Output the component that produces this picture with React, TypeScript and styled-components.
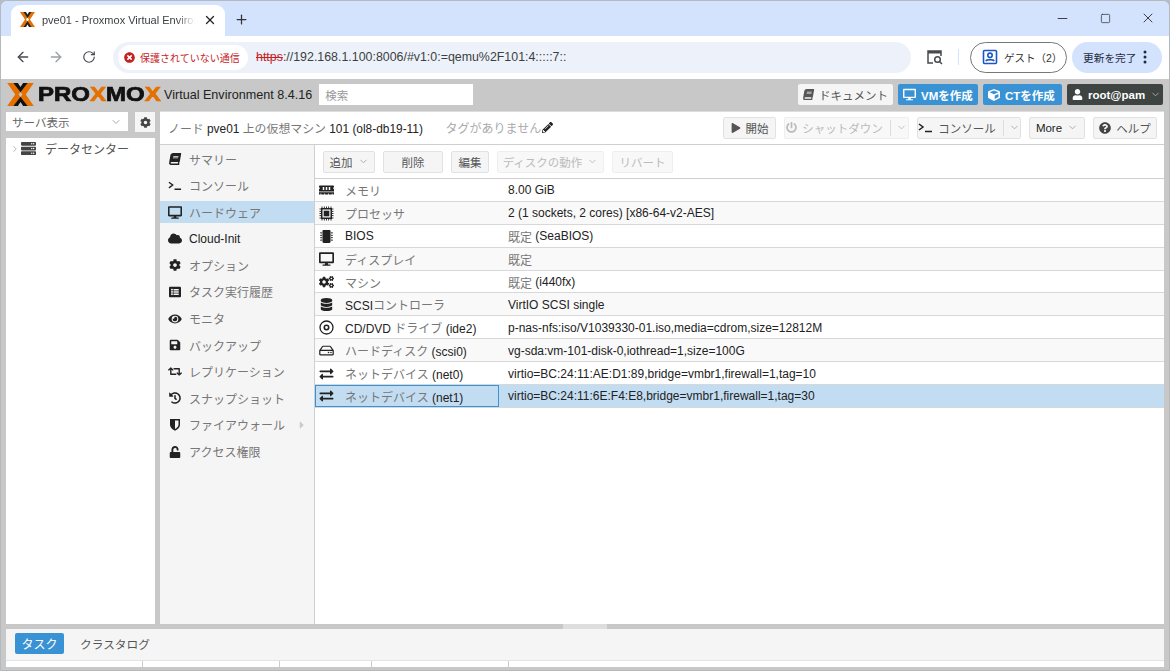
import React from 'react';
import styled, { createGlobalStyle } from 'styled-components';
import { ArrowLeft, ArrowRight, RotateCw, Plus, X as XIcon, Minus, Square, ChevronDown, ChevronRight } from 'lucide-react';
import {
  FaBook, FaDesktop, FaCloud, FaCog, FaListAlt, FaEye, FaSave, FaRetweet, FaHistory, FaUnlock,
  FaMemory, FaMicrochip, FaDatabase, FaCogs, FaExchangeAlt, FaRegHdd, FaUser, FaCube, FaPowerOff, FaPlay,
  FaQuestionCircle, FaPencilAlt, FaServer, FaCaretRight, FaTimesCircle,
} from 'react-icons/fa';

const SANS = `"Liberation Sans", "Noto Sans CJK JP", sans-serif`;

const Global = createGlobalStyle`
  html, body { margin: 0; padding: 0; background: #b9bcc2; }
  * { box-sizing: border-box; }
  body { font-family: ${SANS}; overflow: hidden; }
`;

const Win = styled.div`
  width: 1170px; height: 671px; display: flex; flex-direction: column; overflow: hidden;
  border: 1px solid #b4b8bf; border-radius: 7px 7px 0 0; background: #d3e3fd;
`;
const TabStrip = styled.div`
  height: 35px; flex: none; display: flex; align-items: flex-end; padding-left: 10px; background: #d3e3fd; position: relative;
  &::before { content: ''; position: absolute; left: 257px; top: -1px; width: 62px; height: 1px; background: #5f9480; }
`;
const Tab = styled.div`
  width: 214px; height: 31px; background: #fff; border-radius: 9px 9px 0 0; display: flex; align-items: center;
  padding: 0 9px 2px 9px; font-size: 12px; color: #333;
`;
const TabTitle = styled.span`
  width: 153px; margin-left: 7px; white-space: nowrap; overflow: hidden; font-size: 11px; color: #3c4043; flex: none;
  -webkit-mask-image: linear-gradient(90deg, #000 88%, transparent);
  mask-image: linear-gradient(90deg, #000 88%, transparent);
`;
const TabClose = styled.span`margin-left: 8px; display: flex; color: #222;`;
const NewTab = styled.span`margin: 0 0 9px 9px; display: flex; color: #333;`;
const Spacer = styled.div`flex: 1;`;
const WinCtl = styled.span`
  width: 42.5px; height: 30px; display: flex; align-items: center; justify-content: center; color: #333; margin-bottom: 2px;
`;
const WinCtls = styled.div`display: flex; align-self: flex-start; margin-top: 2px;`;

const BrowserBar = styled.div`
  height: 43px; flex: none; background: #fff; display: flex; align-items: center; padding: 0 6px 1px 5px;
`;
const NavBtn = styled.span<{ $off?: boolean }>`
  width: 33px; display: flex; justify-content: center; color: ${p => (p.$off ? '#9a9ea5' : '#474a4f')};
`;
const Omni = styled.div`
  width: 798px; height: 31px; margin-left: 8px; border-radius: 16px; background: #edf2fa; display: flex; align-items: center; padding-left: 5px;
`;
const Chip = styled.div`
  width: 130px; height: 25px; border-radius: 13px; background: #fff; display: flex; align-items: center; padding-left: 6px;
  color: #c5221f; font-size: 10px; gap: 5px; white-space: nowrap;
`;
const Url = styled.span`margin-left: 8px; font-size: 12.4px; color: #3c4043; white-space: nowrap;`;
const Strike = styled.span`color: #c5221f; text-decoration: line-through;`;
const LensWrap = styled.span`margin-left: 15px; display: flex;`;
const Sep = styled.span`width: 1px; height: 16px; background: #d3e3fd; margin: 0 11px 0 14px;`;
const GuestPill = styled.div`
  width: 97px; height: 31px; border: 1px solid #75777b; border-radius: 16px; display: flex; align-items: center; padding-left: 11px;
  font-size: 10.5px; color: #333; gap: 6px; white-space: nowrap;
`;
const UpdatePill = styled.div`
  width: 90px; height: 31px; margin-left: 5px; border-radius: 16px; background: #d3e3fd; display: flex; align-items: center; padding-left: 11px;
  font-size: 10.7px; color: #1f2a44; white-space: nowrap; gap: 7px;
`;

const Pve = styled.div`flex: 1; min-height: 0; background: #c8c8c8; display: flex; flex-direction: column;`;
const Head = styled.div`height: 32px; flex: none; display: flex; align-items: center; padding: 0 6px 1px 6px;`;
const LogoText = styled.span`
  font-family: "Liberation Sans", sans-serif; font-weight: 700; font-size: 19.5px; color: #111; margin-left: 4px; width: 126px;
  display: inline-block; white-space: nowrap; transform: scaleX(1.23); transform-origin: left center; -webkit-text-stroke: 0.7px #111;
`;
const Ox = styled.span`color: #e57000; -webkit-text-stroke: 0.7px #e57000;`;
const Version = styled.span`font-size: 12.6px; color: #222; white-space: nowrap;`;
const Search = styled.div`
  width: 154px; height: 21px; background: #fff; margin-left: 7px; font-size: 11.5px; color: #999; display: flex; align-items: center; padding-left: 6px;
`;
const HeadBtn = styled.div<{ $kind?: 'plain' | 'blue' | 'dark'; $w: number }>`
  width: ${p => p.$w}px; height: 21px; margin-left: ${p => (p.$kind === 'plain' ? 0 : 5)}px; border-radius: 2px; display: flex; align-items: center; gap: 5px; padding-left: 5px; white-space: nowrap;
  font-size: 11.5px; font-weight: ${p => (p.$kind === 'plain' ? 400 : 700)};
  background: ${p => (p.$kind === 'blue' ? '#3892d4' : p.$kind === 'dark' ? '#3d4442' : '#f5f5f5')};
  color: ${p => (p.$kind === 'plain' ? '#555' : '#fff')};
`;

const Body = styled.div`flex: 1; min-height: 0; display: flex; padding-left: 5px;`;
const Left = styled.div`width: 149px; flex: none; display: flex; flex-direction: column;`;
const LeftTop = styled.div`height: 27px; flex: none; display: flex; gap: 7px; padding-top: 1px;`;
const ViewSelect = styled.div`
  width: 122px; height: 19px; background: #fff; display: flex; align-items: center; justify-content: space-between; padding: 0 6px;
  font-size: 11.5px; color: #666;
`;
const GearBtn = styled.div`
  width: 20px; height: 20px; background: #f5f5f5; display: flex; align-items: center; justify-content: center; color: #444;
`;
const Tree = styled.div`
  flex: 1; background: #fff; display: flex; align-items: flex-start; padding: 3px 0 0 4px; font-size: 12px; color: #555; gap: 1px;
`;
const TreeRow = styled.div`display: flex; align-items: center; gap: 9px; height: 15px;`;
const Main = styled.div`
  flex: 1; margin: 0 5px; background: #fff; display: flex; flex-direction: column; min-width: 0;
`;
const TitleBar = styled.div`
  height: 34px; flex: none; display: flex; align-items: center; padding: 0 7px 1px 8px; border-bottom: 1px solid #cfcfcf; border-top: 1px solid #ddd; font-size: 11.9px; color: #222;
`;
const Jp = styled.span<{ $c?: string }>`color: ${p => p.$c || '#777'};`;
const Title = styled.span`width: 278px; white-space: nowrap;`;
const TagNone = styled.span`font-size: 12px; white-space: nowrap; display: flex; align-items: center; gap: 1px; width: 278px; color: #aaa;`;
const TBtn = styled.div<{ $w: number; $off?: boolean; $ml?: number }>`
  width: ${p => p.$w}px; height: 22px; margin-left: ${p => p.$ml ?? 8}px; flex: none; background: ${p => (p.$off ? '#f8f8f8' : '#f5f5f5')}; border: 1px solid ${p => (p.$off ? '#eee' : '#e2e2e2')}; border-radius: 2px;
  display: flex; align-items: center; justify-content: center; gap: 5px; font-size: 11.5px; white-space: nowrap; color: ${p => (p.$off ? '#bbb' : '#555')};
`;
const SplitLine = styled.span`width: 1px; height: 16px; background: #ddd; margin-left: 2px;`;
const Content = styled.div`flex: 1; min-height: 0; display: flex;`;
const Nav = styled.div`
  width: 155px; flex: none; background: #f5f5f5; border-right: 1px solid #cfcfcf; padding-top: 3px; display: flex; flex-direction: column;
`;
const NavItem = styled.div<{ $on?: boolean; $dark?: boolean }>`
  height: 22px; margin-bottom: 4.6px; padding-left: 8px; display: flex; align-items: center; gap: 7px; font-size: 12px; color: ${p => (p.$dark ? '#222' : '#777')};
  background: ${p => (p.$on ? '#c2ddf2' : 'transparent')}; flex: none; white-space: nowrap;
  & > svg:first-child { width: 14px; flex: none; color: #222; }
`;
const NavArrow = styled.span`margin-left: 4px; display: flex; color: #ccc;`;
const SlantBook = styled(FaBook)`transform: skewX(-10deg);`;
const Panel = styled.div`flex: 1; min-width: 0; display: flex; flex-direction: column;`;
const Tools = styled.div`height: 34px; flex: none; display: flex; align-items: center; border-bottom: 1px solid #cfcfcf;`;
const Row = styled.div<{ $alt?: boolean; $sel?: boolean }>`
  height: 22.9px; flex: none; display: flex; border-bottom: 1px solid #d8d8d8; font-size: 12px; color: #222;
  background: ${p => (p.$sel ? '#c2ddf2' : p.$alt ? '#f9f9f9' : '#fff')};
`;
const NameCell = styled.div<{ $sel?: boolean }>`
  width: 184px; flex: none; display: flex; align-items: center; padding: 1px 0 0 ${p => (p.$sel ? 3 : 4)}px; gap: 11px; white-space: nowrap;
  border: ${p => (p.$sel ? '1px solid #3892d4' : 'none')};
  & > svg { width: 15px; flex: none; color: #222; }
`;
const ValCell = styled.div`flex: 1; display: flex; align-items: center; padding: 1px 0 0 9px; white-space: pre;`;

const Gutter = styled.div`height: 5px; flex: none; display: flex; justify-content: flex-end; padding-right: 562px;`;
const Collapse = styled.div`width: 44px; height: 5px; background: #dedede;`;
const Foot = styled.div`
  height: 31px; flex: none; background: #f5f5f5; margin: 0 5px; display: flex; align-items: center; padding: 0 0 3px 9px; gap: 16px; font-size: 11.7px; color: #555;
`;
const TaskTab = styled.div`
  width: 49px; height: 21px; background: #3892d4; color: #fff; display: flex; align-items: center; justify-content: center; border-radius: 2px; font-size: 12px;
`;
const FootHead = styled.div`height: 7px; flex: none; margin: 0 5px; background: #fff; border-top: 1px solid #e3e3e3; display: flex;`;
const FootCol = styled.div<{ $w: number }>`width: ${p => p.$w}px; border-right: 1px solid #ccc; height: 100%;`;
const FootBase = styled.div`height: 3px; flex: none;`;

const MarkX = () => (
  <svg width="27" height="23" viewBox="0 0 30 26" style={{ flex: 'none' }}>
    <path d="M0 0h8l9 13-9 13H0l9-13zM30 0h-8l-9 13 9 13h8l-9-13z" fill="#e57000" />
    <path d="M7 0h5l3 4.500L18 0h5l-8 10.500zM7 26h5l3-4.500 3 4.500h5l-8-10.500z" fill="#111" />
  </svg>
);
const Tiny = () => (
  <svg width="15" height="15" viewBox="0 0 30 30" style={{ flex: 'none' }}>
    <path d="M0 0h8l10 15-10 15H0l10-15zM30 0h-8L12 15l10 15h8L20 15z" fill="#e57000" />
    <path d="M7 0h5l3 5 3-5h5l-8 12zM7 30h5l3-5 3 5h5l-8-12z" fill="#222" />
  </svg>
);
const Lens = () => (
  <svg width="18" height="16" viewBox="0 0 18 16" fill="none" stroke="#474a4f" strokeWidth="1.5">
    <path d="M7 14H2V2h13v5" />
    <rect x="2" y="2" width="13" height="2.500" fill="#474a4f" stroke="none" />
    <circle cx="11.500" cy="10.500" r="2.800" />
    <path d="M13.500 12.500l2.500 2.500" />
  </svg>
);
const Guest = () => (
  <svg width="16" height="16" viewBox="0 0 16 16" fill="none" stroke="#1a56c4" strokeWidth="1.6">
    <rect x="1.500" y="1.500" width="13" height="13" rx="1" />
    <circle cx="8" cy="6.300" r="2.200" />
    <path d="M3.800 12c1-1.800 7.400-1.800 8.400 0" />
  </svg>
);
const Prompt = () => (
  <svg width="15" height="11" viewBox="0 0 15 11" fill="none" stroke="#222" strokeWidth="1.500" style={{ flex: 'none' }}>
    <path d="M1 2l4 3-4 3M7 9.500h7" />
  </svg>
);
const Disc = () => (
  <svg width="15" height="15" viewBox="0 0 15 15" fill="none" stroke="#222" style={{ flex: 'none' }}>
    <circle cx="7.500" cy="7.500" r="6.500" strokeWidth="1.300" />
    <circle cx="7.500" cy="7.500" r="2.200" strokeWidth="1.600" />
  </svg>
);
const Cpu = () => (
  <svg width="15" height="15" viewBox="0 0 15 15" style={{ flex: 'none' }}>
    <path d="M3 0.500v14M5.400 0.500v14M7.500 0.500v14M9.600 0.500v14M12 0.500v14M0.500 3h14M0.500 5.400h14M0.500 7.500h14M0.500 9.600h14M0.500 12h14" stroke="#222" strokeWidth="0.900" />
    <rect x="2" y="2" width="11" height="11" fill="#222" />
    <rect x="3.500" y="3.500" width="8" height="8" fill="#f9f9f9" />
    <rect x="4.700" y="4.700" width="5.600" height="5.600" fill="#222" />
  </svg>
);
const Shield = () => (
  <svg width="12" height="13" viewBox="0 0 12 13" style={{ flex: 'none' }}>
    <path d="M1 1h10v5.500C11 10 8 11.800 6 12.700 4 11.800 1 10 1 6.500z" fill="#222" />
    <path d="M6 2.500h3.500v4C9.500 8.800 7.500 10 6 10.900z" fill="#f5f5f5" />
  </svg>
);

const navItems: Array<[React.ReactNode, string, boolean?]> = [
  [<SlantBook size={12} />, 'サマリー'],
  [<Prompt />, 'コンソール'],
  [<FaDesktop size={13} />, 'ハードウェア'],
  [<FaCloud size={13} />, 'Cloud-Init', true],
  [<FaCog size={12} />, 'オプション'],
  [<FaListAlt size={12} />, 'タスク実行履歴'],
  [<FaEye size={12} />, 'モニタ'],
  [<FaSave size={12} />, 'バックアップ'],
  [<FaRetweet size={13} />, 'レプリケーション'],
  [<FaHistory size={12} />, 'スナップショット'],
  [<Shield />, 'ファイアウォール'],
  [<FaUnlock size={12} />, 'アクセス権限'],
];

const rows: Array<[React.ReactNode, React.ReactNode, React.ReactNode]> = [
  [<FaMemory size={14} />, <Jp>メモリ</Jp>, '8.00 GiB'],
  [<Cpu />, <Jp>プロセッサ</Jp>, '2 (1 sockets, 2 cores) [x86-64-v2-AES]'],
  [<FaMicrochip size={13} />, 'BIOS', <><Jp>既定 </Jp>(SeaBIOS)</>],
  [<FaDesktop size={14} />, <Jp>ディスプレイ</Jp>, <Jp>既定</Jp>],
  [<FaCogs size={14} />, <Jp>マシン</Jp>, <><Jp>既定 </Jp>(i440fx)</>],
  [<FaDatabase size={13} />, <>SCSI<Jp>コントローラ</Jp></>, 'VirtIO SCSI single'],
  [<Disc />, <>CD/DVD <Jp>ドライブ</Jp> (ide2)</>, 'p-nas-nfs:iso/V1039330-01.iso,media=cdrom,size=12812M'],
  [<FaRegHdd size={13} />, <><Jp>ハードディスク</Jp> (scsi0)</>, 'vg-sda:vm-101-disk-0,iothread=1,size=100G'],
  [<FaExchangeAlt size={14} />, <><Jp>ネットデバイス</Jp> (net0)</>, 'virtio=BC:24:11:AE:D1:89,bridge=vmbr1,firewall=1,tag=10'],
  [<FaExchangeAlt size={14} />, <><Jp>ネットデバイス</Jp> (net1)</>, 'virtio=BC:24:11:6E:F4:E8,bridge=vmbr1,firewall=1,tag=30'],
];

export default function App() {
  return (
    <>
      <Global />
      <Win>
        <TabStrip>
          <Tab>
            <Tiny />
            <TabTitle>pve01 - Proxmox Virtual Environment</TabTitle>
            <TabClose><XIcon size={14} strokeWidth={2.2} /></TabClose>
          </Tab>
          <NewTab><Plus size={15} strokeWidth={2} /></NewTab>
          <Spacer />
          <WinCtls>
            <WinCtl><Minus size={15} strokeWidth={1.5} /></WinCtl>
            <WinCtl><Square size={11} strokeWidth={1.6} /></WinCtl>
            <WinCtl><XIcon size={16} strokeWidth={1.4} /></WinCtl>
          </WinCtls>
        </TabStrip>
        <BrowserBar>
          <NavBtn><ArrowLeft size={16} /></NavBtn>
          <NavBtn $off><ArrowRight size={16} /></NavBtn>
          <NavBtn><RotateCw size={14} /></NavBtn>
          <Omni>
            <Chip><FaTimesCircle size={11} />保護されていない通信</Chip>
            <Url><Strike>https</Strike>://192.168.1.100:8006/#v1:0:=qemu%2F101:4:::::7::</Url>
          </Omni>
          <LensWrap><Lens /></LensWrap>
          <Sep />
          <GuestPill><Guest />ゲスト（2）</GuestPill>
          <UpdatePill>更新を完了<svg width="4" height="14" viewBox="0 0 4 14" fill="#1f2a44"><circle cx="2" cy="2" r="1.500" /><circle cx="2" cy="7" r="1.500" /><circle cx="2" cy="12" r="1.500" /></svg></UpdatePill>
        </BrowserBar>
        <Pve>
          <Head>
            <MarkX />
            <LogoText>PRO<Ox>X</Ox>MO<Ox>X</Ox></LogoText>
            <Version>Virtual Environment 8.4.16</Version>
            <Search>検索</Search>
            <Spacer />
            <HeadBtn $kind="plain" $w={95}><SlantBook size={11} /> ドキュメント</HeadBtn>
            <HeadBtn $kind="blue" $w={80}><FaDesktop size={13} />VMを作成</HeadBtn>
            <HeadBtn $kind="blue" $w={79}><FaCube size={12} />CTを作成</HeadBtn>
            <HeadBtn $kind="dark" $w={96}><FaUser size={11} />root@pam<ChevronDown size={11} color="#aaa" /></HeadBtn>
          </Head>
          <Body>
            <Left>
              <LeftTop>
                <ViewSelect>サーバ表示<ChevronDown size={12} color="#aaa" /></ViewSelect>
                <GearBtn><FaCog size={11} /></GearBtn>
              </LeftTop>
              <Tree>
                <ChevronRight size={10} color="#aaa" style={{ marginTop: 3 }} />
                <TreeRow><FaServer size={15} color="#444" />データセンター</TreeRow>
              </Tree>
            </Left>
            <Main>
              <TitleBar>
                <Title><Jp>ノード</Jp> pve01 <Jp>上の仮想マシン</Jp> 101 (ol8-db19-11)</Title>
                <TagNone>タグがありません<FaPencilAlt size={11} color="#222" /></TagNone>
                <TBtn $w={53} $ml={0}><FaPlay size={10} />開始</TBtn>
                <TBtn $w={125} $off><FaPowerOff size={11} />シャットダウン<SplitLine /><ChevronDown size={11} /></TBtn>
                <TBtn $w={104}><Prompt />コンソール<SplitLine /><ChevronDown size={11} color="#aaa" /></TBtn>
                <TBtn $w={56}><Jp $c="#222">More</Jp><ChevronDown size={11} color="#aaa" /></TBtn>
                <TBtn $w={64}><FaQuestionCircle size={12} color="#444" />ヘルプ</TBtn>
              </TitleBar>
              <Content>
                <Nav>
                  {navItems.map(([ic, label, dark], i) => (
                    <NavItem key={i} $on={i === 2} $dark={dark}>
                      {ic}
                      {label}
                      {i === 10 && <NavArrow><FaCaretRight size={12} /></NavArrow>}
                    </NavItem>
                  ))}
                </Nav>
                <Panel>
                  <Tools>
                    <TBtn $w={52}>追加<ChevronDown size={11} color="#aaa" /></TBtn>
                    <TBtn $w={60}>削除</TBtn>
                    <TBtn $w={38}>編集</TBtn>
                    <TBtn $w={107} $off>ディスクの動作<ChevronDown size={11} /></TBtn>
                    <TBtn $w={61} $off>リバート</TBtn>
                  </Tools>
                  {rows.map(([ic, name, val], i) => (
                    <Row key={i} $alt={i % 2 === 1} $sel={i === 9}>
                      <NameCell $sel={i === 9}>{ic}<span>{name}</span></NameCell>
                      <ValCell>{val}</ValCell>
                    </Row>
                  ))}
                </Panel>
              </Content>
            </Main>
          </Body>
          <Gutter><Collapse /></Gutter>
          <Foot><TaskTab>タスク</TaskTab>クラスタログ</Foot>
          <FootHead>
            <FootCol $w={137} />
            <FootCol $w={137} />
            <FootCol $w={92} />
            <FootCol $w={137} />
          </FootHead>
          <FootBase />
        </Pve>
      </Win>
    </>
  );
}
